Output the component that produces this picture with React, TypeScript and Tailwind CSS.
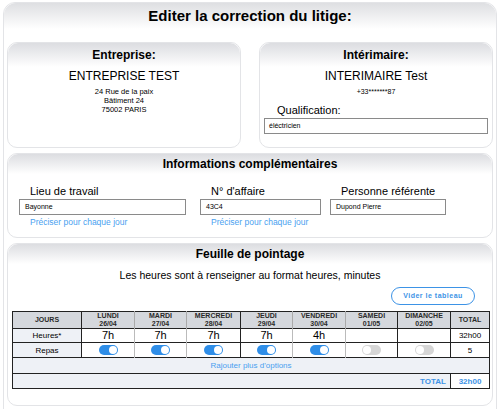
import React from 'react';

const days = [
  { name: 'LUNDI', date: '26/04', hours: '7h', meal: true },
  { name: 'MARDI', date: '27/04', hours: '7h', meal: true },
  { name: 'MERCREDI', date: '28/04', hours: '7h', meal: true },
  { name: 'JEUDI', date: '29/04', hours: '7h', meal: true },
  { name: 'VENDREDI', date: '30/04', hours: '4h', meal: true },
  { name: 'SAMEDI', date: '01/05', hours: '', meal: false },
  { name: 'DIMANCHE', date: '02/05', hours: '', meal: false },
];

// right border of each day column: dark or light
const darkRight = [false, false, true, false, false, true, true];

function Toggle({ on }: { on: boolean }) {
  return (
    <div
      className={
        'mx-auto flex h-[10px] w-[19px] items-center rounded-full px-[1px] ' +
        (on ? 'justify-end bg-[#2f8ee8]' : 'justify-start bg-[#d6d6d6]')
      }
    >
      <div className="h-[8px] w-[8px] rounded-full bg-white" />
    </div>
  );
}

function Card({
  title,
  className,
  head = 'h-[24px]',
  children,
}: {
  title: string;
  className?: string;
  head?: string;
  children: React.ReactNode;
}) {
  return (
    <div className={'rounded-[10px] border border-[#e3e4e7] bg-white ' + (className ?? '')}>
      <div className={'flex items-center justify-center rounded-t-[10px] bg-gradient-to-b from-[#dcdde1] to-white ' + head}>
        <span className="text-[12px] font-bold text-black">{title}</span>
      </div>
      {children}
    </div>
  );
}

function Field({ label, value, width, link }: { label: string; value: string; width: string; link?: boolean }) {
  return (
    <div className={width}>
      <div className="pl-[11px] text-[11px] leading-[13px] text-black">{label}</div>
      <div className="mt-[1px] flex h-[16px] items-center border border-[#8a8a8a] bg-white pl-[5px] text-[7px] text-black">
        {value}
      </div>
      {link && <div className="mt-[2px] pl-[11px] text-[8.5px] leading-[10px] text-[#4a9ff0]">Préciser pour chaque jour</div>}
    </div>
  );
}

export default function App() {
  return (
    <div className="min-h-[409px] w-[500px] overflow-hidden bg-white pl-[3px] pt-[2px] font-['Liberation_Sans',Arial,sans-serif] text-black">
      <div className="w-[494px] rounded-t-[12px] border border-[#e3e4e7] pb-[6px]">
        <div className="flex h-[26px] items-center justify-center rounded-t-[12px] bg-gradient-to-b from-[#dedfe2] to-white">
          <h1 className="text-[15px] font-bold">Editer la correction du litige:</h1>
        </div>

        <div className="mt-[13px] flex gap-[18px] px-[3px]">
          <Card title="Entreprise:" className="h-[106px] w-[235px]">
            <div className="mt-[2px] text-center text-[12px] leading-[14px]">ENTREPRISE TEST</div>
            <div className="mt-[4px] text-center text-[7.5px] leading-[9px]">
              <div>24 Rue de la paix</div>
              <div>Bâtiment 24</div>
              <div>75002 PARIS</div>
            </div>
          </Card>
          <Card title="Intérimaire:" className="h-[106px] w-[235px]">
            <div className="mt-[2px] text-center text-[12px] leading-[14px]">INTERIMAIRE Test</div>
            <div className="mt-[4px] text-center text-[7px] leading-[9px]">+33*******87</div>
            <div className="mt-[8px] pl-[17px] text-[11px] leading-[13px]">Qualification:</div>
            <div className="mx-[4px] mt-[1px] flex h-[16px] items-center border border-[#8a8a8a] pl-[4px] text-[7px]">
              éléctricien
            </div>
          </Card>
        </div>

        <div className="mt-[5px] px-[3px]">
          <Card title="Informations complémentaires" head="h-[20px]" className="h-[85px]">
            <div className="mt-[11px] flex gap-[14px] pl-[11px]">
              <Field label="Lieu de travail" value="Bayonne" width="w-[167px]" link />
              <Field label="N° d'affaire" value="43C4" width="w-[121px]" link />
              <div className="-ml-[5px]">
                <Field label="Personne référente" value="Dupond Pierre" width="w-[116px]" />
              </div>
            </div>
          </Card>
        </div>

        <div className="mt-[5px] px-[3px]">
          <Card title="Feuille de pointage" head="h-[20px]" className="h-[163px]">
            <div className="mt-[4px] text-center text-[10.5px] leading-[14px]">
              Les heures sont à renseigner au format heures, minutes
            </div>
            <div className="mt-[5px] flex justify-end pr-[17px]">
              <button className="h-[18px] w-[84px] rounded-full border-[1.5px] border-[#3d93e6] text-[7px] font-bold tracking-[0.5px] text-[#3d93e6]">
                Vider le tableau
              </button>
            </div>
            <div className="mt-[6px] px-[4px]">
              <table className="w-[477px] table-fixed border-collapse border border-[#222] text-center">
                <colgroup>
                  <col className="w-[69px]" />
                  <col className="w-[53px]" />
                  <col className="w-[52px]" />
                  <col className="w-[54px]" />
                  <col className="w-[52px]" />
                  <col className="w-[53px]" />
                  <col className="w-[52px]" />
                  <col className="w-[53px]" />
                  <col className="w-[39px]" />
                </colgroup>
                <thead>
                  <tr className="h-[17px] bg-[#d5d8dd] text-[7px] font-bold leading-[8px] text-[#2a2a2a]">
                    <th className="border-r border-[#222]">JOURS</th>
                    {days.map((d, i) => (
                      <th key={d.name} className={'border-r ' + (darkRight[i] ? 'border-[#222]' : 'border-[#aaa]')}>
                        <div>{d.name}</div>
                        <div>{d.date}</div>
                      </th>
                    ))}
                    <th>TOTAL</th>
                  </tr>
                </thead>
                <tbody>
                  <tr className="h-[14px] border-t border-[#222] leading-[13px]">
                    <td className="border-r border-[#222] bg-[#eef1f6] text-[8px]">Heures*</td>
                    {days.map((d, i) => (
                      <td key={d.name} className={'border-r text-[11px] ' + (darkRight[i] ? 'border-[#222]' : 'border-[#bbb]')}>
                        {d.hours}
                      </td>
                    ))}
                    <td className="text-[8px]">32h00</td>
                  </tr>
                  <tr className="h-[15px] border-t border-[#222] leading-[13px]">
                    <td className="border-r border-[#222] bg-[#eef1f6] text-[8px]">Repas</td>
                    {days.map((d, i) => (
                      <td key={d.name} className={'border-r ' + (darkRight[i] ? 'border-[#222]' : 'border-[#bbb]')}>
                        <Toggle on={d.meal} />
                      </td>
                    ))}
                    <td className="text-[8px]">5</td>
                  </tr>
                  <tr className="h-[16px] border-t border-[#222] bg-[#eef1f6] leading-[13px]">
                    <td colSpan={9} className="text-[8px] text-[#4a9ff0]">Rajouter plus d'options</td>
                  </tr>
                  <tr className="h-[15px] border-t border-[#222] bg-[#eef1f6] leading-[13px]">
                    <td colSpan={8} className="border-r border-[#222] pr-[4px] text-right text-[8px] font-bold text-[#3d93e6]">
                      TOTAL
                    </td>
                    <td className="bg-white text-[8px] font-bold text-[#3d93e6]">32h00</td>
                  </tr>
                </tbody>
              </table>
            </div>
          </Card>
        </div>
      </div>
    </div>
  );
}
